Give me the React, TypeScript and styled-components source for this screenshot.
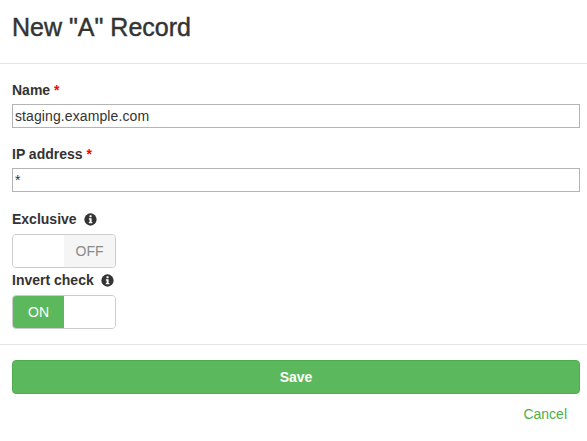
import { createGlobalStyle, styled } from "styled-components";

const GlobalStyle = createGlobalStyle`
  * {
    box-sizing: border-box;
  }
  body {
    margin: 0;
    background: #fff;
    color: #333;
    font-family: "Liberation Sans", Arial, sans-serif;
    font-size: 14px;
  }
`;

const Wrapper = styled.div`
  width: 587px;
  height: 441px;
  overflow: hidden;
`;

const Header = styled.div`
  height: 64px;
  padding: 14px 12px 0;
  border-bottom: 1px solid #e5e5e5;
`;

const Title = styled.h4`
  margin: 0;
  font-size: 25px;
  line-height: 26px;
  font-weight: 500;
  -webkit-text-stroke: 0.45px #333;
`;

const Body = styled.div`
  height: 281px;
  padding: 16px 7px 0 12px;
  border-bottom: 1px solid #e5e5e5;
`;

const Field = styled.div`
  margin-bottom: 16px;
`;

const Label = styled.label`
  display: flex;
  align-items: center;
  gap: 7px;
  height: 20px;
  font-weight: 700;
  font-size: 14px;
`;

const Required = styled.span`
  color: #f00;
`;

const TextInput = styled.input`
  display: block;
  width: 100%;
  height: 24px;
  margin-top: 4px;
  padding: 0 2px;
  border: 1px solid #b4b4b4;
  border-radius: 0;
  outline: none;
  color: #333;
  font-family: inherit;
  font-size: 14px;
  letter-spacing: 0.1px;
`;

const SwitchList = styled.div`
  padding-top: 1px;
`;

const SwitchField = styled.div`
  margin-bottom: 2px;
`;

const Switch = styled.div`
  display: flex;
  width: 104px;
  height: 34px;
  margin-top: 5px;
  border: 1px solid #ccc;
  border-radius: 4px;
  overflow: hidden;
`;

const SwitchPart = styled.span<{ $tone?: "on" | "off" }>`
  flex: 1;
  display: flex;
  align-items: center;
  justify-content: center;
  font-size: 14px;
  background: ${({ $tone }) =>
    $tone === "on" ? "#5cb85c" : $tone === "off" ? "#f5f5f5" : "#fff"};
  color: ${({ $tone }) =>
    $tone === "on" ? "#fff" : $tone === "off" ? "#8a8a8a" : "#333"};
`;

const Footer = styled.div`
  padding: 15px 7px 0 12px;
`;

const SaveButton = styled.button`
  display: block;
  width: 100%;
  height: 34px;
  border: 1px solid #4cae4c;
  border-radius: 4px;
  background: #5cb85c;
  color: #fff;
  font-family: inherit;
  font-size: 14px;
  font-weight: 700;
`;

const CancelRow = styled.div`
  display: flex;
  justify-content: flex-end;
  padding: 10px 13px 0 0;
  line-height: 20px;
`;

const CancelLink = styled.a`
  color: #4cae4c;
  font-size: 14px;
  text-decoration: none;
`;

function InfoIcon() {
  return (
    <svg width="13" height="13" viewBox="0 0 14 14" aria-hidden="true">
      <circle cx="7" cy="7" r="6.6" fill="#333" />
      <rect x="5.9" y="2.4" width="2.3" height="2.1" rx="0.4" fill="#fff" />
      <path d="M5.2 5.6h3v4.1h.8v1.4H5.2V9.7H6V7H5.2z" fill="#fff" />
    </svg>
  );
}

export default function App() {
  return (
    <Wrapper>
      <GlobalStyle />
      <Header>
        <Title>New "A" Record</Title>
      </Header>
      <Body>
        <Field>
          <Label>
            <span>
              Name <Required>*</Required>
            </span>
          </Label>
          <TextInput defaultValue="staging.example.com" />
        </Field>
        <Field>
          <Label>
            <span>
              IP address <Required>*</Required>
            </span>
          </Label>
          <TextInput defaultValue="*" />
        </Field>
        <SwitchList>
          <SwitchField>
            <Label>
              Exclusive <InfoIcon />
            </Label>
            <Switch>
              <SwitchPart />
              <SwitchPart $tone="off">OFF</SwitchPart>
            </Switch>
          </SwitchField>
          <SwitchField>
            <Label>
              Invert check <InfoIcon />
            </Label>
            <Switch>
              <SwitchPart $tone="on">ON</SwitchPart>
              <SwitchPart />
            </Switch>
          </SwitchField>
        </SwitchList>
      </Body>
      <Footer>
        <SaveButton>Save</SaveButton>
        <CancelRow>
          <CancelLink href="#">Cancel</CancelLink>
        </CancelRow>
      </Footer>
    </Wrapper>
  );
}
